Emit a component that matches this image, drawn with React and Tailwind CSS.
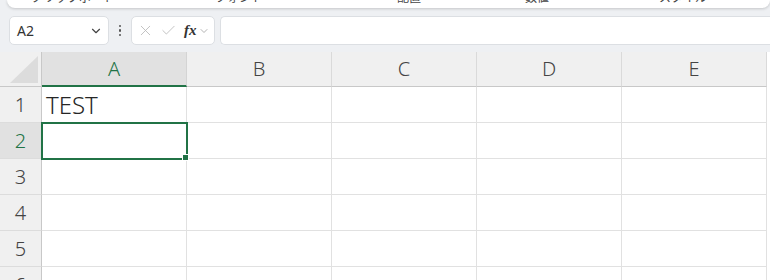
import { ChevronDown, X, Check } from 'lucide-react';

const COLS = ['A', 'B', 'C', 'D', 'E'];
const ROWS = [1, 2, 3, 4, 5, 6];

const ribbonGroups = [
  { label: 'クリップボード', x: 'ml-[24px]' },
  { label: 'フォント', x: 'ml-[100px]' },
  { label: '配置', x: 'ml-[134px]' },
  { label: '数値', x: 'ml-[104px]' },
  { label: 'スタイル', x: 'ml-[110px]' },
];

function Ribbon() {
  return (
    <div className="h-[8px] ml-[7px] bg-white rounded-b-[8px] shadow-[0_1px_3px_rgba(0,0,0,0.18)] overflow-hidden">
      <div className="flex items-end h-[8px] text-[12px] leading-[14px] text-[#444]">
        {ribbonGroups.map((g) => (
          <span key={g.label} className={`${g.x} mb-[3px] whitespace-nowrap`}>{g.label}</span>
        ))}
      </div>
    </div>
  );
}

function FormulaBar() {
  return (
    <div className="flex items-center h-[29px] mt-[8px] pl-[9px]">
      <div className="flex items-center justify-between w-[100px] h-[29px] bg-white border border-[#dcdfe3] rounded-[5px] pl-[7px] pr-[5px]">
        <span className="text-[14px] text-[#333]">A2</span>
        <ChevronDown size={14} strokeWidth={2} className="text-[#444]" />
      </div>
      <div className="w-[22px] flex flex-col items-center gap-[2px]">
        <span className="w-[2.5px] h-[2.5px] rounded-full bg-[#555]" />
        <span className="w-[2.5px] h-[2.5px] rounded-full bg-[#555]" />
        <span className="w-[2.5px] h-[2.5px] rounded-full bg-[#555]" />
      </div>
      <div className="flex items-center w-[84px] h-[29px] bg-white border border-[#dcdfe3] rounded-[5px] pl-[5px]">
        <X size={17} strokeWidth={1.2} className="text-[#b8b8b8]" />
        <Check size={17} strokeWidth={1.2} className="text-[#b8b8b8] ml-[6px]" />
        <span className="ml-[7px] text-[15px] italic font-bold text-[#333] font-['Liberation_Serif',serif]">fx</span>
        <ChevronDown size={12} strokeWidth={1.5} className="text-[#999] ml-[1px]" />
      </div>
      <div className="flex-1 h-[29px] ml-[5px] bg-white border border-[#dcdfe3] rounded-l-[5px] border-r-0" />
    </div>
  );
}

function Grid() {
  return (
    <div className="mt-[7px] grid grid-cols-[42px_repeat(5,145px)] grid-rows-[35px_repeat(6,36px)] bg-white">
      {/* corner */}
      <div className="bg-[#f0f0f0] border-r border-b border-[#c8c8c8] flex items-end justify-end pr-[3px] pb-[3px]">
        <div className="w-[28px] h-[27px] bg-[#dcdcdc] [clip-path:polygon(100%_0,100%_100%,0_100%)]" />
      </div>
      {COLS.map((c) => {
        const sel = c === 'A';
        return (
          <div
            key={c}
            className={`flex items-center justify-center text-[20px] font-light border-r ${
              sel
                ? 'bg-[#e1e1e1] text-[#217346] border-b-2 border-b-[#217346] border-r-[#d4d4d4]'
                : 'bg-[#f0f0f0] text-[#444] border-b border-b-[#c8c8c8] border-r-[#dadada]'
            }`}
          >
            {c}
          </div>
        );
      })}
      {ROWS.map((r) => (
        <Row key={r} r={r} />
      ))}
    </div>
  );
}

function Row({ r }) {
  const sel = r === 2;
  return (
    <>
      <div
        className={`flex items-center justify-center text-[20px] font-light border-r border-r-[#c8c8c8] border-b border-b-[#dcdcdc] ${
          sel ? 'bg-[#e1e1e1] text-[#217346]' : 'bg-[#f0f0f0] text-[#444]'
        }`}
      >
        {r}
      </div>
      {COLS.map((c) => {
        const active = sel && c === 'A';
        return (
          <div
            key={c}
            className={`relative border-r border-b border-[#e1e1e1] text-[24px] font-light text-[#262626] flex items-center pl-[4px] ${
              active ? 'outline-2 outline-[#217346] -outline-offset-1 z-10' : ''
            }`}
          >
            {r === 1 && c === 'A' ? 'TEST' : null}
            {active && (
              <span className="absolute right-[-3px] bottom-[-3px] w-[5px] h-[5px] bg-[#217346] border border-white box-content" />
            )}
          </div>
        );
      })}
    </>
  );
}

export default function App() {
  return (
    <div className="w-[770px] h-[280px] overflow-hidden bg-[#eef0f3] font-['Noto_Sans','Noto_Sans_CJK_JP',sans-serif]">
      <Ribbon />
      <FormulaBar />
      <Grid />
    </div>
  );
}
